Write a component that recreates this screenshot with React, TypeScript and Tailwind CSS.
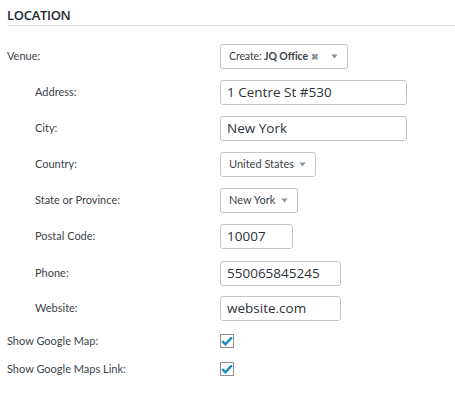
import React from "react";

const label = { fontFamily: 'Lato, "Open Sans", sans-serif' };
const inputFont = { fontFamily: '"Open Sans", "Noto Sans", sans-serif' };

function Caret() {
  return (
    <svg width="7" height="5" viewBox="0 0 7 5" className="shrink-0">
      <path d="M0.5 0.5 L6.5 0.5 L3.5 4.5 Z" fill="#8c8f94" />
    </svg>
  );
}

function Check() {
  return (
    <div className="w-[14px] h-[14px] border border-[#8c8f94] bg-white flex items-center justify-center">
      <svg width="12" height="10" viewBox="0 0 12 10">
        <path d="M1.2 5.2 L4.4 8.2 L10.8 1.4" stroke="#1e8cbe" strokeWidth="2.4" fill="none" />
      </svg>
    </div>
  );
}

function Row({ label: text, indent, h, children }: { label: string; indent?: boolean; h: string; children: React.ReactNode }) {
  return (
    <div className={`flex items-center ${h}`}>
      <div className={`w-[213px] shrink-0 text-[11px] text-[#3c434a] whitespace-nowrap ${indent ? "pl-[28px]" : ""}`}>{text}</div>
      <div className="flex items-center">{children}</div>
    </div>
  );
}

function Input({ value, w }: { value: string; w: string }) {
  return (
    <div
      className={`${w} h-[25px] border border-[#c3c4c7] rounded-[3px] bg-white flex items-center px-[6px] text-[13.5px] text-[#2c3338] whitespace-nowrap`}
      style={inputFont}
    >
      {value}
    </div>
  );
}

function Select({ children, w }: { children: React.ReactNode; w: string }) {
  return (
    <div className={`${w} h-[25px] border border-[#c3c4c7] rounded-[3px] bg-white flex items-center pl-[8px] pr-[9px] text-[11px] text-[#3c434a] whitespace-nowrap`}>
      {children}
    </div>
  );
}

export default function App() {
  return (
    <div className="w-[455px] h-[396px] bg-white pl-[7px] overflow-hidden" style={label}>
      <div className="pt-[6px] h-[25px] text-[13px] font-semibold text-[#23282d] tracking-[-0.3px]" style={inputFont}>
        LOCATION
      </div>
      <div className="h-px bg-[#e2e4e7]" />
      <div className="pt-[12px]">
        <Row label="Venue:" h="h-[37px]">
          <Select w="w-[128px]">
            <span className="text-[10.5px] tracking-[-0.1px]">
              Create: <b className="font-bold">JQ Office</b>
            </span>
            <span className="ml-auto text-[#8c8f94] text-[9px] font-bold leading-none">✖</span>
            <span className="ml-[12px] flex">
              <Caret />
            </span>
          </Select>
        </Row>
        <Row label="Address:" indent h="h-[35px]">
          <Input value="1 Centre St #530" w="w-[187px]" />
        </Row>
        <Row label="City:" indent h="h-[37px]">
          <Input value="New York" w="w-[187px]" />
        </Row>
        <Row label="Country:" indent h="h-[35px]">
          <Select w="w-[96px]">
            <span>United States</span>
            <span className="ml-auto flex">
              <Caret />
            </span>
          </Select>
        </Row>
        <Row label="State or Province:" indent h="h-[36px]">
          <Select w="w-[78px]">
            <span>New York</span>
            <span className="ml-auto flex">
              <Caret />
            </span>
          </Select>
        </Row>
        <Row label="Postal Code:" indent h="h-[37px]">
          <Input value="10007" w="w-[73px]" />
        </Row>
        <Row label="Phone:" indent h="h-[36px]">
          <Input value="550065845245" w="w-[121px]" />
        </Row>
        <Row label="Website:" indent h="h-[35px]">
          <Input value="website.com" w="w-[121px]" />
        </Row>
        <Row label="Show Google Map:" h="h-[30px]">
          <Check />
        </Row>
        <Row label="Show Google Maps Link:" h="h-[26px]">
          <Check />
        </Row>
      </div>
    </div>
  );
}
